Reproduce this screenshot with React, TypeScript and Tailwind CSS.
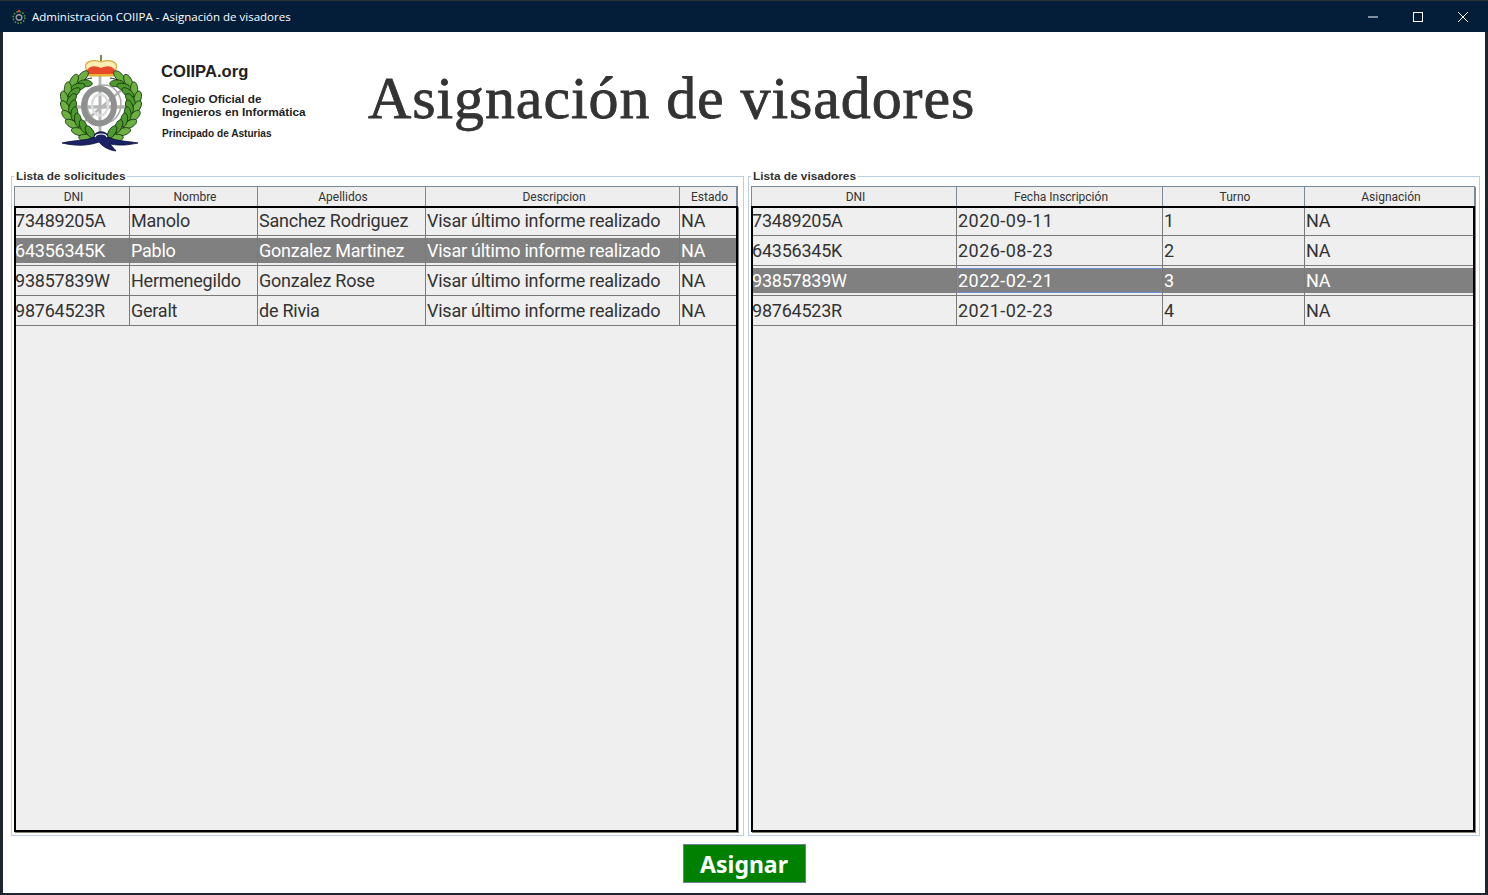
import React from 'react';

const solicitudes = [
  ['73489205A', 'Manolo', 'Sanchez Rodriguez', 'Visar último informe realizado', 'NA'],
  ['64356345K', 'Pablo', 'Gonzalez Martinez', 'Visar último informe realizado', 'NA'],
  ['93857839W', 'Hermenegildo', 'Gonzalez Rose', 'Visar último informe realizado', 'NA'],
  ['98764523R', 'Geralt', 'de Rivia', 'Visar último informe realizado', 'NA'],
];

const visadores = [
  ['73489205A', '2020-09-11', '1', 'NA'],
  ['64356345K', '2026-08-23', '2', 'NA'],
  ['93857839W', '2022-02-21', '3', 'NA'],
  ['98764523R', '2021-02-23', '4', 'NA'],
];

// x, y, tangent (degrees from up) of points along the laurel branch
const branch = [
  [84, 80, 68], [76, 84, 52], [71, 91, 28], [68, 99, 10], [69, 107, -6],
  [71, 115, -20], [75, 122, -35], [81, 129, -48], [88, 135, -58],
];

const Laurel: React.FC = () => (
  <g>
    <path d="M92 78C64 82 57 115 94 139" fill="none" stroke="#16300c" strokeWidth="1" />
    {branch.map(([x, y, t], i) => {
      const rad = (t * Math.PI) / 180;
      const dx = Math.cos(rad) * 3.6;
      const dy = Math.sin(rad) * 3.6;
      return (
        <g key={i}>
          <ellipse cx={x - dx} cy={y - dy} rx="3.6" ry="7.5" transform={`rotate(${t - 25} ${x - dx} ${y - dy})`} fill="#6bb041" stroke="#17330d" strokeWidth="0.8" />
          <ellipse cx={x + dx} cy={y + dy} rx="3.4" ry="7" transform={`rotate(${t + 25} ${x + dx} ${y + dy})`} fill="#4c9a2e" stroke="#17330d" strokeWidth="0.8" />
        </g>
      );
    })}
  </g>
);

const Logo = () => (
  <svg width="90" height="102" viewBox="56 52 90 102" className="shrink-0">
    {/* cross bars */}
    <path d="M100 72v64" stroke="#b4b6b4" strokeWidth="3" />
    <path d="M73 107h55" stroke="#b4b6b4" strokeWidth="3.5" />
    <path d="M83 123L125 87" stroke="#b4b6b4" strokeWidth="2.5" />
    {/* wheel */}
    <ellipse cx="104" cy="104" rx="17" ry="19" fill="none" stroke="#a8a8a8" strokeWidth="1.5" />
    <ellipse cx="99" cy="106" rx="15" ry="17.5" fill="none" stroke="#8f9090" strokeWidth="6" />
    <ellipse cx="100" cy="105" rx="8" ry="10.5" fill="none" stroke="#dcdcdc" strokeWidth="2.5" />
    {/* crown */}
    <path d="M101 55v6" stroke="#7c8a4a" strokeWidth="2" />
    <path d="M87 71c-6-10 7-12 14-9 7-3 20-1 14 9l-2 5H89z" fill="#fbeeb4" stroke="#d8a93a" strokeWidth="1.2" />
    <path d="M87 70c4-5 9-4 14-2 5-2 10-3 14 2l-2 5H89z" fill="#e64a2a" />
    <path d="M89 75h24" stroke="#e8b437" strokeWidth="2" />
    <Laurel />
    <g transform="translate(202 0) scale(-1 1)">
      <Laurel />
    </g>
    {/* ribbon */}
    <path d="M62 143c12-3 24-2 32-6 0-7 14-7 14 0 8 4 18 4 30 6-10 2-18 3-28 1l6 7c-8-1-14-5-17-9-9 3-20 5-37 1z" fill="#1b2364" stroke="#0a0e35" strokeWidth="0.8" />
    <path d="M95 137c1-4 11-4 12 0" fill="none" stroke="#fff" strokeWidth="1.2" />
  </svg>
);

const AppIcon = () => (
  <svg width="16" height="16" viewBox="0 0 16 16" className="shrink-0">
    <circle cx="8" cy="8.5" r="2.8" fill="none" stroke="#9a9a9a" strokeWidth="1.4" />
    <circle cx="8" cy="8.5" r="5.8" fill="none" stroke="#5d9a35" strokeWidth="1.6" strokeDasharray="1.5 1.5" />
    <circle cx="8" cy="2" r="1.2" fill="#d9462f" />
  </svg>
);

type PanelProps = {
  title: string;
  columns: string[];
  grid: string;
  rows: string[][];
  selected: number;
  focusCol?: number;
  rightGap: string;
  dateCol?: number;
};

const Panel: React.FC<PanelProps> = ({ title, columns, grid, rows, selected, focusCol, rightGap, dateCol }) => (
  <fieldset className={`flex-1 min-w-0 border border-[#b8cfe5] pl-[2px] ${rightGap} pb-[3px] pt-[3px] flex flex-col`}>
    <legend className="px-[2px] text-[11.8px] leading-[13px] font-bold text-[#333]" style={{ fontFamily: '"Liberation Sans", sans-serif' }}>
      {title}
    </legend>
    <div className={`grid ${grid} h-[20px] shrink-0 bg-[#eeeeee] border-t border-[#7a8a99]`}>
      {columns.map(c => (
        <div key={c} className="border-r border-b border-[#7a8a99] first:border-l last:border-r-2 flex items-center justify-center pl-[3px] pt-[1px] text-[12px] text-[#333]">
          {c}
        </div>
      ))}
    </div>
    <div className="flex-1 bg-[#efefef] border-2 border-black min-h-0 overflow-hidden shadow-[1px_1px_0_#808080]">
      <div className="-mt-[2px] -ml-[2px]">
        {rows.map((row, r) => (
          <div key={row[0]} className={`grid ${grid} h-[30px] border-b border-[#7a7a7a]`}>
            {row.map((cell, c) => (
              <div key={c} className={`${c < row.length - 1 ? 'border-r border-[#7a7a7a]' : ''} h-[29px] flex items-center`}>
                <span
                  className={`w-full h-[25px] leading-[25px] pl-[1px] whitespace-nowrap text-[18px] ${c === dateCol ? 'tracking-[0.45px]' : 'tracking-[-0.24px]'} ${r === selected ? 'bg-[#808080] text-white' : 'text-[#333]'} ${r === selected && c === focusCol ? 'shadow-[inset_0_1px_0_#6a8ed8,inset_0_-1px_0_#6a8ed8,inset_1px_0_0_#6a8ed8]' : ''}`}
                >
                  {cell}
                </span>
              </div>
            ))}
          </div>
        ))}
      </div>
    </div>
  </fieldset>
);

export default function App() {
  return (
    <div className="w-[1488px] h-[895px] flex flex-col overflow-hidden bg-[#1e2430] pl-[3px] pr-[3px] pb-[2px]" style={{ fontFamily: 'Roboto, sans-serif' }}>
      <div className="-mx-[3px] h-[32px] shrink-0 bg-[#041e3a] border-t border-[#2c2f33] flex items-center text-white">
        <div className="pl-[11px] flex items-center gap-[5px] flex-1">
          <AppIcon />
          <span className="text-[11.5px]" style={{ fontFamily: '"Open Sans", sans-serif' }}>Administración COIIPA - Asignación de visadores</span>
        </div>
        <div className="flex items-center gap-[35px] pr-[20px]">
          <svg width="10" height="10" viewBox="0 0 10 10"><path d="M0 5h10" stroke="#fff" /></svg>
          <svg width="10" height="10" viewBox="0 0 10 10"><rect x="0.5" y="0.5" width="9" height="9" fill="none" stroke="#fff" /></svg>
          <svg width="10" height="10" viewBox="0 0 10 10"><path d="M0 0l10 10M10 0L0 10" stroke="#fff" /></svg>
        </div>
      </div>

      <div className="flex-1 bg-white flex flex-col min-h-0">
        <div className="h-[142px] shrink-0 flex items-center pl-[53px]">
          <Logo />
          <div className="ml-[15px] w-[207px] text-[#222] pb-[4px]" style={{ fontFamily: '"Liberation Sans", sans-serif' }}>
            <div className="text-[16.6px] leading-[18px] font-bold">COIIPA.org</div>
            <div className="mt-[12px] pl-[1px] text-[11.8px] leading-[13px] font-bold">Colegio Oficial de<br />Ingenieros en Informática</div>
            <div className="mt-[9px] pl-[1px] text-[10.1px] leading-[12px] font-bold">Principado de Asturias</div>
          </div>
          <h1 className="text-[60px] leading-none tracking-[0.9px] text-[#333] pb-[10px] [-webkit-text-stroke:0.8px_#333]" style={{ fontFamily: '"Liberation Serif", serif' }}>
            Asignación de visadores
          </h1>
        </div>

        <div className="flex-1 min-h-0 flex gap-[4px] pl-[8px] pr-[5px] -mt-[4px]">
          <Panel
            title="Lista de solicitudes"
            columns={['DNI', 'Nombre', 'Apellidos', 'Descripcion', 'Estado']}
            grid="grid-cols-[116px_128px_168px_254px_58px]"
            rows={solicitudes}
            selected={1}
            rightGap="pr-[5px]"
          />
          <Panel
            title="Lista de visadores"
            columns={['DNI', 'Fecha Inscripción', 'Turno', 'Asignación']}
            grid="grid-cols-[206px_206px_142px_171px]"
            rows={visadores}
            selected={2}
            focusCol={1}
            dateCol={1}
            rightGap="pr-[4px]"
          />
        </div>

        <div className="h-[57px] shrink-0 flex items-center justify-center pb-[2px]">
          <button className="w-[123px] h-[39px] pt-[1px] bg-[#008000] border border-[#708090] text-white font-bold leading-none text-[23px]" style={{ fontFamily: '"Noto Sans", sans-serif' }}>
            Asignar
          </button>
        </div>
      </div>
    </div>
  );
}
